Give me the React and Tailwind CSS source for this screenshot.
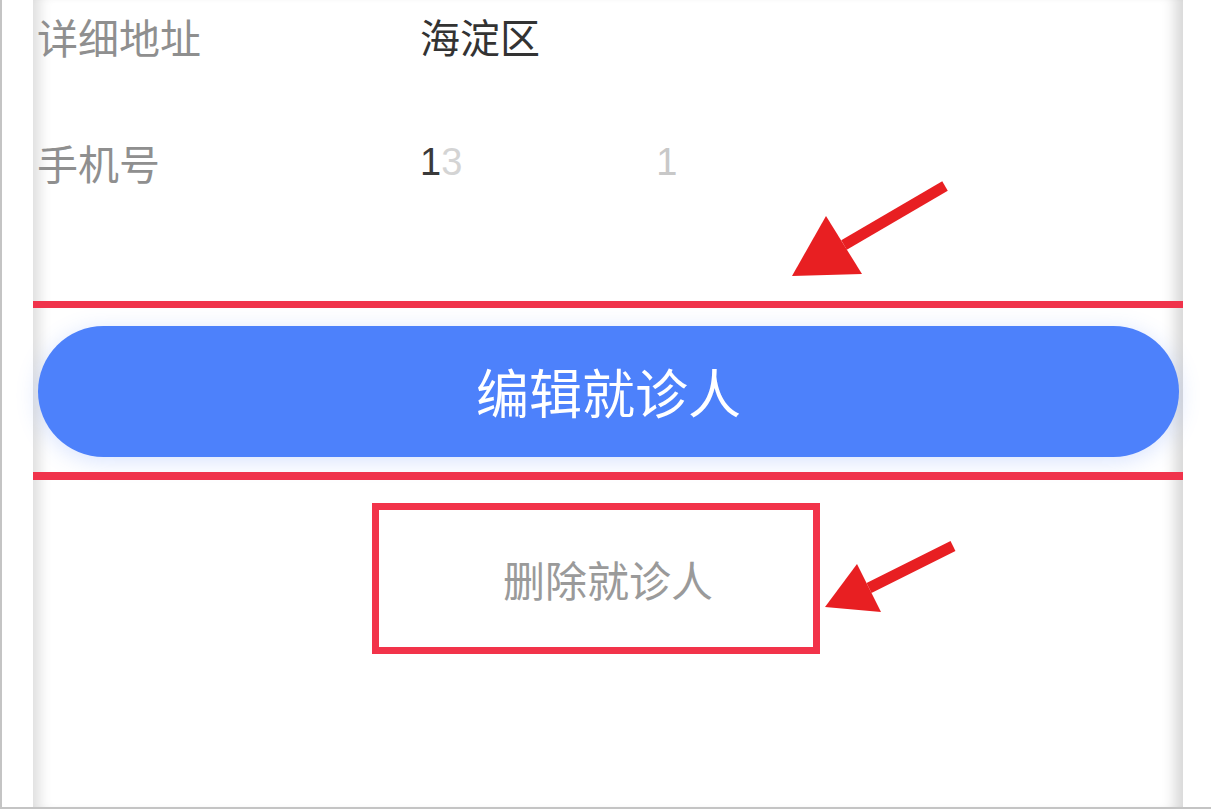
import React from 'react';

const font = { fontFamily: '"Noto Sans CJK SC", "Noto Sans", sans-serif' };

function Arrow({ className, tail, tip, left, right }) {
  // simple red annotation arrow: shaft + triangular head
  return (
    <svg className={className} width="1211" height="809" viewBox="0 0 1211 809">
      <line x1={tail[0]} y1={tail[1]} x2={(left[0] + right[0]) / 2} y2={(left[1] + right[1]) / 2} stroke="#e81f22" strokeWidth="11" />
      <polygon points={`${tip[0]},${tip[1]} ${left[0]},${left[1]} ${right[0]},${right[1]}`} fill="#e81f22" />
    </svg>
  );
}

export default function App() {
  return (
    <div className="relative w-[1211px] h-[809px] bg-white border-l-2 border-b-2 border-[#c4c4c4] overflow-hidden" style={font}>
      <div className="ml-[31px] w-[1150px] h-full flex flex-col bg-white shadow-[inset_16px_0_14px_-10px_rgba(0,0,0,0.14),inset_-18px_0_14px_-10px_rgba(0,0,0,0.16)]">
        {/* 详细地址 */}
        <div className="h-[72px] flex items-center pl-[4px]">
          <span className="w-[383px] text-[41px] text-[#8f8f8f] leading-none">详细地址</span>
          <span className="text-[40px] text-[#333333] leading-none">海淀区</span>
        </div>

        {/* 手机号 */}
        <div className="h-[72px] mt-[54px] flex items-center pl-[4px]">
          <span className="w-[383px] text-[41px] text-[#8f8f8f] leading-none">手机号</span>
          <span className="text-[38px] leading-none" style={{ fontFamily: '"Liberation Sans", sans-serif' }}>
            <span className="text-[#3a3a3a]">1</span>
            <span className="text-[#d4d4d4]">3</span>
          </span>
          <span className="ml-[194px] text-[38px] leading-none text-[#c8c8c8]" style={{ fontFamily: '"Liberation Sans", sans-serif' }}>1</span>
        </div>

        <div className="mt-[103px] h-[7px] bg-[#f0334b]" />

        <div className="mt-[18px] pl-[5px] pr-[4px]">
          <div className="h-[131px] rounded-full bg-[#4d81fb] flex items-center justify-center shadow-[0_4px_22px_rgba(77,129,251,0.22)]">
            <span className="text-[53px] text-white leading-none">编辑就诊人</span>
          </div>
        </div>

        <div className="mt-[15px] h-[8px] bg-[#f0334b]" />

        <div className="mt-[23px] ml-[339px] w-[448px] h-[151px] border-[7px] border-[#f2334a] flex items-center justify-center pl-[24px]">
          <span className="text-[42px] text-[#9a9a9a] leading-none">删除就诊人</span>
        </div>
      </div>

      <Arrow className="absolute left-0 top-0 pointer-events-none" tail={[943, 186]} tip={[790, 276]} left={[824, 216]} right={[860, 274]} />
      <Arrow className="absolute left-0 top-0 pointer-events-none" tail={[951, 546]} tip={[823, 607]} left={[855, 564]} right={[879, 612]} />
    </div>
  );
}
